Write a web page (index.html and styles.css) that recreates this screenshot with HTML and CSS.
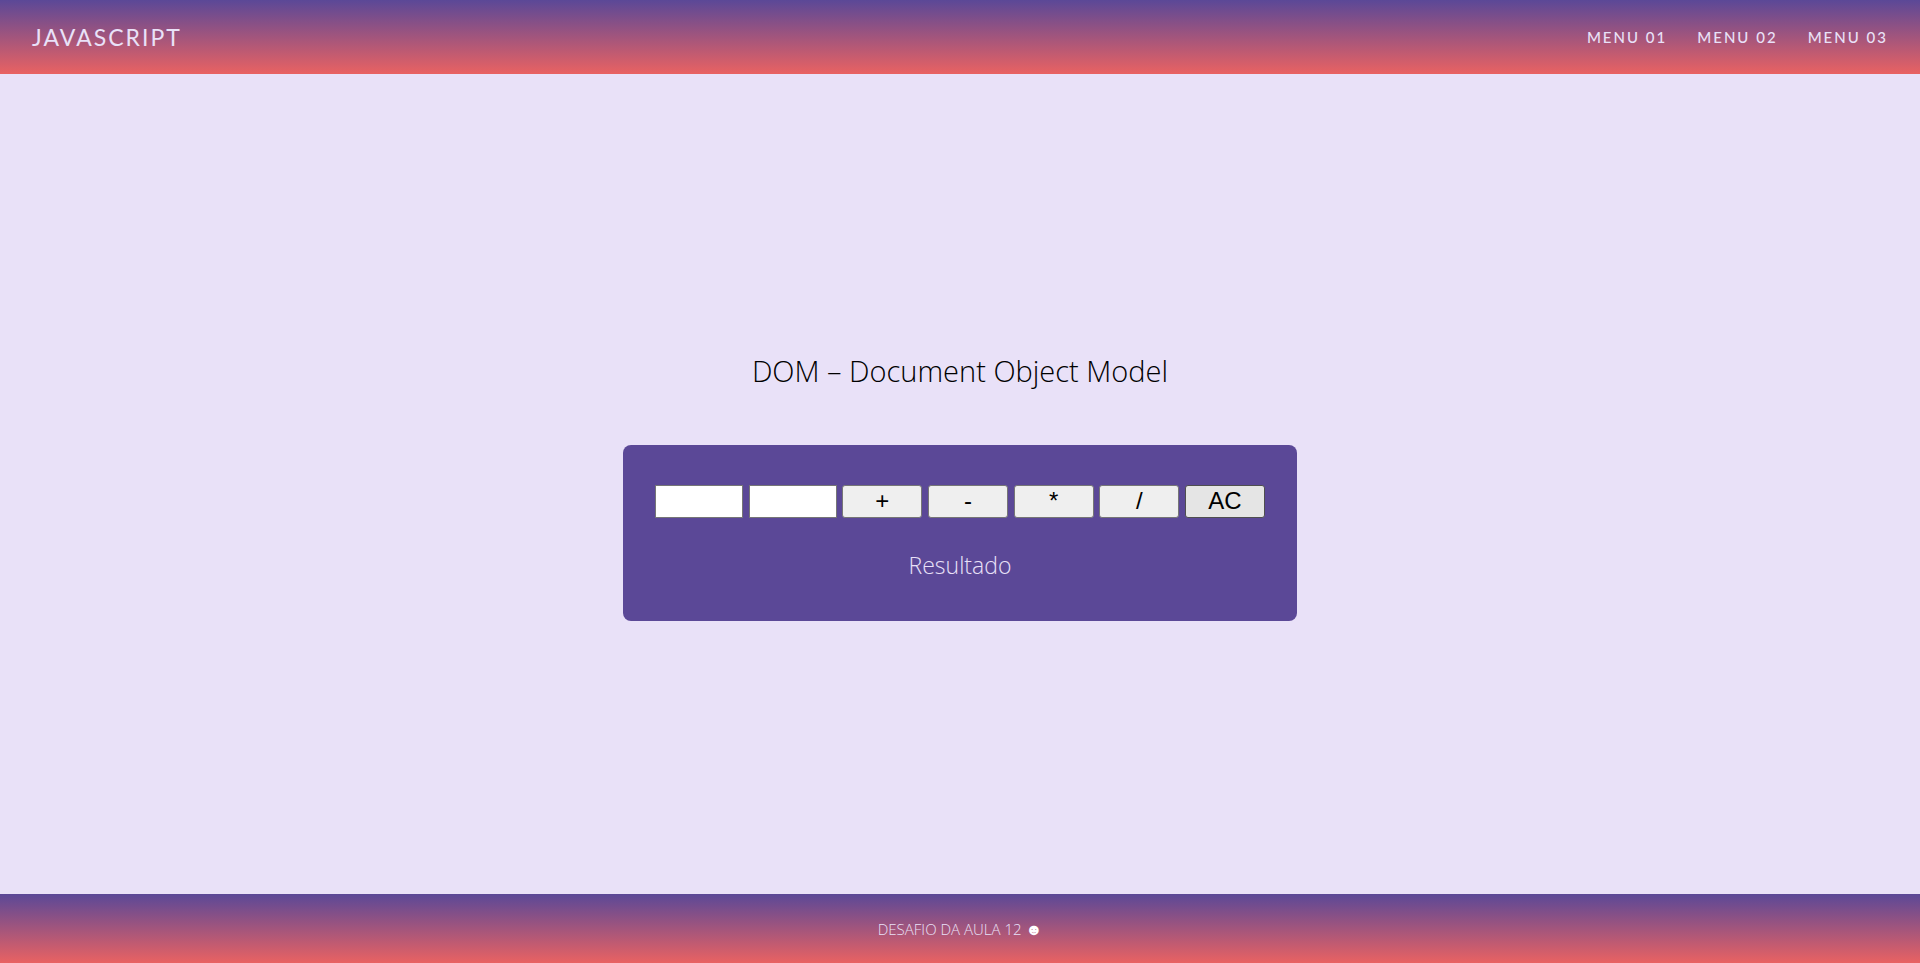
FILE: index.html
```html
<!DOCTYPE html>
<html lang="pt-BR">
<head>
<meta charset="utf-8">
<title>DOM</title>
<link rel="stylesheet" href="styles.css">
</head>
<body>
<header class="header">
  <a class="logo" href="#">JAVASCRIPT</a>
  <nav class="menu">
    <a href="#">MENU 01</a>
    <a href="#">MENU 02</a>
    <a href="#">MENU 03</a>
  </nav>
</header>
<main class="main">
  <h1 class="title">DOM – Document Object Model</h1>
  <section class="calculator">
    <form class="controls">
      <input class="field" type="text" aria-label="Primeiro número">
      <input class="field" type="text" aria-label="Segundo número">
      <button class="key" type="button">+</button>
      <button class="key" type="button">-</button>
      <button class="key" type="button">*</button>
      <button class="key" type="button">/</button>
      <button class="key key-clear" type="button">AC</button>
    </form>
    <p class="result">Resultado</p>
  </section>
</main>
<footer class="footer">
  <p class="credit">DESAFIO DA AULA 12 <span class="smile">☻</span></p>
</footer>
</body>
</html>
```

FILE: styles.css
```css
* {
  box-sizing: border-box;
  margin: 0;
  padding: 0;
}

body {
  display: flex;
  flex-direction: column;
  min-height: 100vh;
  background: #e9e1f8;
  color: #000;
  font-family: "Open Sans", "Noto Sans", sans-serif;
  font-weight: 300;
}

.header,
.footer {
  display: flex;
  align-items: center;
  background: linear-gradient(to bottom, #5b4897, #e96262);
  color: #e9e1f8;
}

.header {
  justify-content: space-between;
  padding: 19px 32px;
  font-family: Lato, "Open Sans", sans-serif;
}

.logo,
.menu a {
  color: inherit;
  text-decoration: none;
}

.logo {
  font-size: 23px;
  font-weight: 400;
  line-height: 36px;
  letter-spacing: 2px;
}

.menu {
  display: flex;
  gap: 30px;
  font-size: 15px;
  font-weight: 500;
  letter-spacing: 2px;
}

.main {
  display: flex;
  flex: 1;
  flex-direction: column;
  align-items: center;
  justify-content: center;
  gap: 50px;
}

.title {
  font-size: 29px;
  font-weight: 300;
  line-height: 48px;
}

.calculator {
  width: 100%;
  max-width: 674px;
  padding: 40px 32px;
  border-radius: 8px;
  background: #5b4897;
}

.controls {
  display: flex;
  justify-content: space-between;
}

.field,
.key {
  height: 33px;
  border: 1px solid #767676;
  font-family: "Liberation Sans", Arial, sans-serif;
  font-size: 24px;
}

.field {
  width: 88px;
  background: #fff;
}

.key {
  width: 80px;
  padding-bottom: 2px;
  border-radius: 3px;
  background: #efefef;
  color: #000;
  line-height: 28px;
}

.key-clear {
  border-color: #4f4f4f;
  background: #e5e5e5;
}

.result {
  margin-top: 32px;
  color: #e9e1f8;
  font-size: 23px;
  line-height: 31px;
  text-align: center;
}

.footer {
  justify-content: center;
  padding: 23px 32px 21px;
}

.credit {
  font-size: 15px;
  line-height: 25px;
}

.smile {
  color: #fff;
  font-family: "DejaVu Sans", sans-serif;
  font-size: 16px;
  line-height: 1;
}
```
